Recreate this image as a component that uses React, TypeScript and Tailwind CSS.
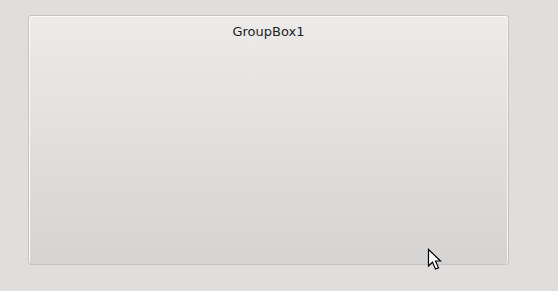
import React from "react";

const Cursor = () => (
  <svg width="16" height="24" viewBox="0 0 16 24" className="absolute left-[427px] top-[248px]">
    <path
      d="M1.5 1.5 L1.5 18 L5.5 14 L8.5 21 L11.5 19.8 L8.5 13 L13.5 13 Z"
      fill="#fff"
      stroke="#000"
      strokeWidth="1.2"
      strokeLinejoin="miter"
    />
  </svg>
);

export default function App() {
  return (
    <div
      className="relative w-[558px] h-[291px] bg-[#dfdedc] pt-[15px] pl-[28px]"
      style={{ fontFamily: '"DejaVu Sans", sans-serif' }}
    >
      <div className="w-[481px] h-[250px] rounded-[3px] border border-[#c4c3c1] bg-gradient-to-b from-[#ecebe9] to-[#d5d4d2] shadow-[inset_1px_1px_0_#fbfbfa,inset_-1px_0_0_#f4f4f3]">
        <div className="text-center text-[13px] text-[#1e1e1e] pt-[6px]">GroupBox1</div>
      </div>
      <Cursor />
    </div>
  );
}
